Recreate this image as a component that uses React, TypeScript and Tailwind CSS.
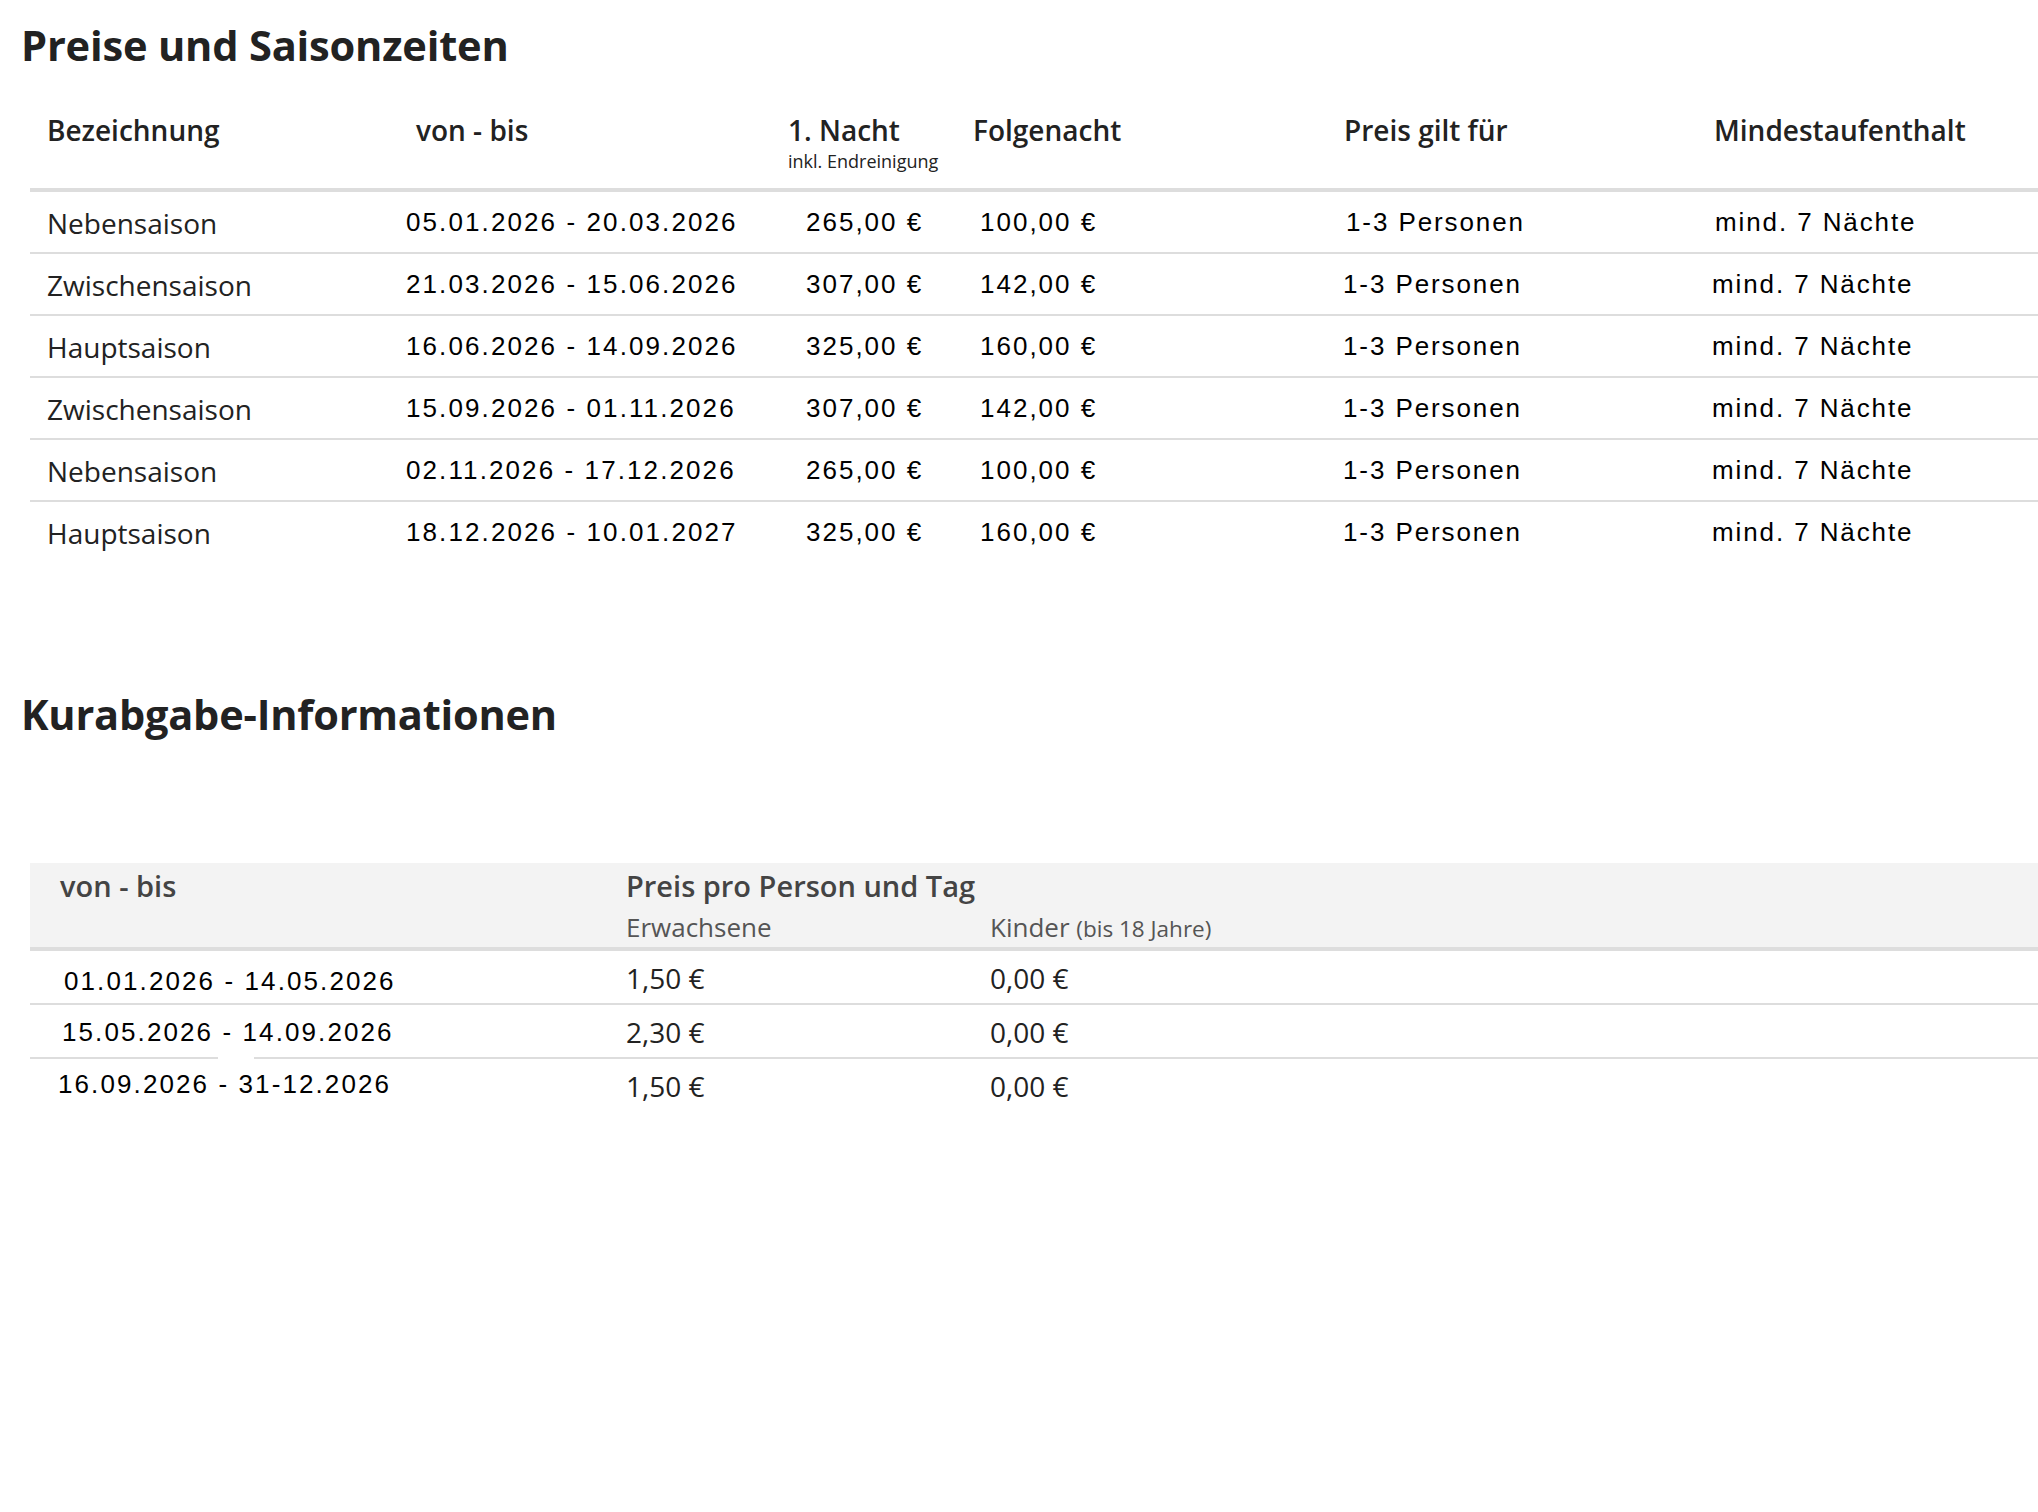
import React from "react";

const sans = { fontFamily: "'Open Sans', 'Noto Sans', sans-serif" };
const arial = { fontFamily: "'Liberation Sans', Arial, sans-serif" };

const rows = [
  ["Nebensaison", "05.01.2026 - 20.03.2026", "265,00 €", "100,00 €"],
  ["Zwischensaison", "21.03.2026 - 15.06.2026", "307,00 €", "142,00 €"],
  ["Hauptsaison", "16.06.2026 - 14.09.2026", "325,00 €", "160,00 €"],
  ["Zwischensaison", "15.09.2026 - 01.11.2026", "307,00 €", "142,00 €"],
  ["Nebensaison", "02.11.2026 - 17.12.2026", "265,00 €", "100,00 €"],
  ["Hauptsaison", "18.12.2026 - 10.01.2027", "325,00 €", "160,00 €"],
];

const kur = [
  { d: "01.01.2026 - 14.05.2026", a: "1,50 €", k: "0,00 €", pad: "pt-[17px] pl-[34px]" },
  { d: "15.05.2026 - 14.09.2026", a: "2,30 €", k: "0,00 €", pad: "pt-[14px] pl-[32px]" },
  { d: "16.09.2026 - 31-12.2026", a: "1,50 €", k: "0,00 €", pad: "pt-[12px] pl-[28px]" },
];

const cols = "grid grid-cols-[370px_371px_185px_371px_370px_373px]";

export default function App() {
  return (
    <div className="min-h-screen w-full overflow-hidden bg-white text-[#222]" style={sans}>
      <h2 className="ml-[21px] mt-[25px] text-[41.6px] font-bold leading-none tracking-[-0.2px] text-[#222]">
        Preise und Saisonzeiten
      </h2>

      <div className="ml-[30px] mt-[25px] w-[2040px]">
        <div
          className={
            cols +
            " h-[100px] border-b-4 border-[#dddddd] pt-[24px] text-[28px] font-semibold leading-none text-[#222]"
          }
        >
          <div className="pl-[17px]">Bezeichnung</div>
          <div className="pl-[16px]">von - bis</div>
          <div className="flex flex-col pl-[17px]">
            <span>1. Nacht</span>
            <span className="mt-[8px] text-[18px] font-normal">inkl. Endreinigung</span>
          </div>
          <div className="pl-[17px]">Folgenacht</div>
          <div className="pl-[17px]">Preis gilt für</div>
          <div className="pl-[17px]">Mindestaufenthalt</div>
        </div>
        {rows.map((r, i) => (
          <div
            key={i}
            className={
              cols +
              " h-[62px] pt-[17px] leading-none " +
              (i < rows.length - 1 ? "border-b-2 border-[#dddddd]" : "")
            }
          >
            <div className="pl-[17px] text-[28px] text-[#222]">{r[0]}</div>
            <div className="pl-[6px] text-[26px] tracking-[2.1px] text-black" style={arial}>
              {r[1]}
            </div>
            <div className="pl-[35px] text-[26px] tracking-[2px] text-black" style={arial}>
              {r[2]}
            </div>
            <div className="pl-[24px] text-[26px] tracking-[2px] text-black" style={arial}>
              {r[3]}
            </div>
            <div
              className={(i === 0 ? "pl-[19px]" : "pl-[16px]") + " text-[26px] tracking-[1.9px] text-black"}
              style={arial}
            >
              1-3 Personen
            </div>
            <div
              className={(i === 0 ? "pl-[18px]" : "pl-[15px]") + " text-[26px] tracking-[1.9px] text-black"}
              style={arial}
            >
              mind. 7 Nächte
            </div>
          </div>
        ))}
      </div>

      <h2 className="ml-[21px] mt-[130px] text-[41.5px] font-bold leading-none tracking-[-0.2px] text-[#222]">
        Kurabgabe-Informationen
      </h2>

      <div className="ml-[30px] mt-[128px] w-[2040px]">
        <div className="grid h-[88px] grid-cols-[596px_364px_1fr] border-b-4 border-[#dddddd] bg-[#f3f3f3] pt-[8px] leading-none">
          <div className="pl-[30px] text-[29px] font-semibold text-[#444]">von - bis</div>
          <div className="col-span-2 flex flex-col">
            <span className="text-[29px] font-semibold text-[#444]">Preis pro Person und Tag</span>
            <div className="mt-[14px] grid grid-cols-[364px_1fr] text-[26px] text-[#555]">
              <span>Erwachsene</span>
              <span>
                Kinder <span className="text-[22.5px]">(bis 18 Jahre)</span>
              </span>
            </div>
          </div>
        </div>
        {kur.map((r, i) => (
          <div
            key={i}
            className={
              "relative grid h-[54px] grid-cols-[596px_364px_1fr] leading-none " +
              (i < kur.length - 1 ? "border-b-2 border-[#dddddd]" : "")
            }
          >
            <div className={r.pad + " text-[26px] tracking-[2.1px] text-black"} style={arial}>
              {r.d}
            </div>
            <div className="pt-[13px] text-[28px] text-[#222]">{r.a}</div>
            <div className="pt-[13px] text-[28px] text-[#222]">{r.k}</div>
            {i === 1 && (
              <span className="absolute bottom-[-2px] left-[188px] h-[2px] w-[36px] bg-white" />
            )}
          </div>
        ))}
      </div>
    </div>
  );
}
